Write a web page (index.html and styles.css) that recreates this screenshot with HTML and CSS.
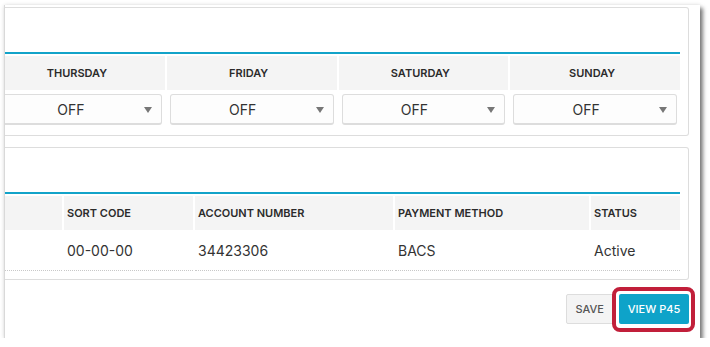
FILE: index.html
```html
<!DOCTYPE html>
<html lang="en">
<head>
  <meta charset="UTF-8">
  <title>Employee pay settings</title>
  <link rel="stylesheet" href="styles.css">
</head>
<body>
  <div class="frame">

    <!-- Working pattern -->
    <div class="card">
      <div class="card-head"></div>
      <div class="card-body">
        <div class="week">
          <div class="th">THURSDAY</div>
          <div class="th">FRIDAY</div>
          <div class="th">SATURDAY</div>
          <div class="th">SUNDAY</div>
          <div class="td"><div class="select">OFF</div></div>
          <div class="td"><div class="select">OFF</div></div>
          <div class="td"><div class="select">OFF</div></div>
          <div class="td"><div class="select">OFF</div></div>
        </div>
      </div>
    </div>

    <!-- Bank details -->
    <div class="card second">
      <div class="card-head"></div>
      <div class="card-body">
        <div class="bank">
          <div class="th"></div>
          <div class="th">SORT CODE</div>
          <div class="th">ACCOUNT NUMBER</div>
          <div class="th">PAYMENT METHOD</div>
          <div class="th">STATUS</div>
          <div class="td"></div>
          <div class="td">00-00-00</div>
          <div class="td">34423306</div>
          <div class="td">BACS</div>
          <div class="td">Active</div>
        </div>
      </div>
    </div>

    <div class="actions">
      <button class="btn save">SAVE</button>
      <button class="btn view">VIEW P45</button>
    </div>
  </div>
</body>
</html>
```

FILE: styles.css
```css
body {
  margin: 0;
  background: #fff;
  font-family: 'Inter', 'Liberation Sans', sans-serif;
  color: #333;
}
.frame {
  box-sizing: border-box;
  width: 696px;
  height: 333px;
  margin: 5px 0 0 4px;
  padding: 2px 11px 0 0;
  background: #fff;
  border-left: 1px solid #d9d9d9;
  box-shadow: 3px 3px 4px rgba(0,0,0,0.5), 0 0 4px rgba(0,0,0,0.12);
}
.card {
  border: 1px solid #ddd;
  border-left: none;
  border-radius: 0 3px 3px 0;
  padding: 0 8px 10px 0;
  overflow: hidden;
}
.card.second {
  margin-top: 11px;
  padding-bottom: 8px;
}
.card-head {
  height: 44px;
}
.card-body {
  border-top: 2px solid #12a3c9;
  padding-top: 2px;
}
.th {
  background: #f4f4f4;
  height: 34px;
  display: flex;
  align-items: center;
  font-size: 11px;
  font-weight: 600;
  color: #2b2b2b;
}
.week {
  display: grid;
  grid-template-columns: repeat(4, 1fr);
  column-gap: 2px;
  width: 685px;
  margin-left: -10px;
}
.week .th {
  justify-content: center;
  padding-right: 6px;
}
.week .td {
  padding: 4px 3px 0;
}
.select {
  position: relative;
  box-sizing: border-box;
  height: 31px;
  border: 1px solid #ddd;
  border-bottom-width: 2px;
  border-radius: 3px;
  background: #fdfdfd;
  display: flex;
  align-items: center;
  justify-content: center;
  padding-right: 18px;
  font-size: 14px;
}
.select::after {
  content: "";
  position: absolute;
  right: 9px;
  top: 12px;
  border-left: 4.5px solid transparent;
  border-right: 4.5px solid transparent;
  border-top: 6px solid #777;
}
.bank {
  display: grid;
  grid-template-columns: 57px 129px 198px 194px 1fr;
  column-gap: 2px;
}
.bank .th {
  padding-left: 3px;
}
.bank .td {
  box-sizing: border-box;
  height: 41px;
  padding-left: 3px;
  display: flex;
  align-items: center;
  font-size: 14px;
  border-bottom: 1px dotted #c8c8c8;
}
.actions {
  display: flex;
  justify-content: flex-end;
  gap: 5px;
  margin-top: 14px;
}
.btn {
  height: 30px;
  font-family: 'Inter', 'Liberation Sans', sans-serif;
  font-size: 11px;
  font-weight: 500;
  border-radius: 2px;
  cursor: pointer;
}
.save {
  padding: 0 9px;
  background: #f4f4f4;
  border: 1px solid #ddd;
  color: #555;
}
.view {
  position: relative;
  width: 70px;
  border: none;
  background: #0ea3c9;
  color: #fff;
}
.view::after {
  content: "";
  position: absolute;
  left: -7px;
  right: -6px;
  top: -7px;
  bottom: -8px;
  border: 4px solid #c11f3a;
  border-radius: 8px;
}
```
